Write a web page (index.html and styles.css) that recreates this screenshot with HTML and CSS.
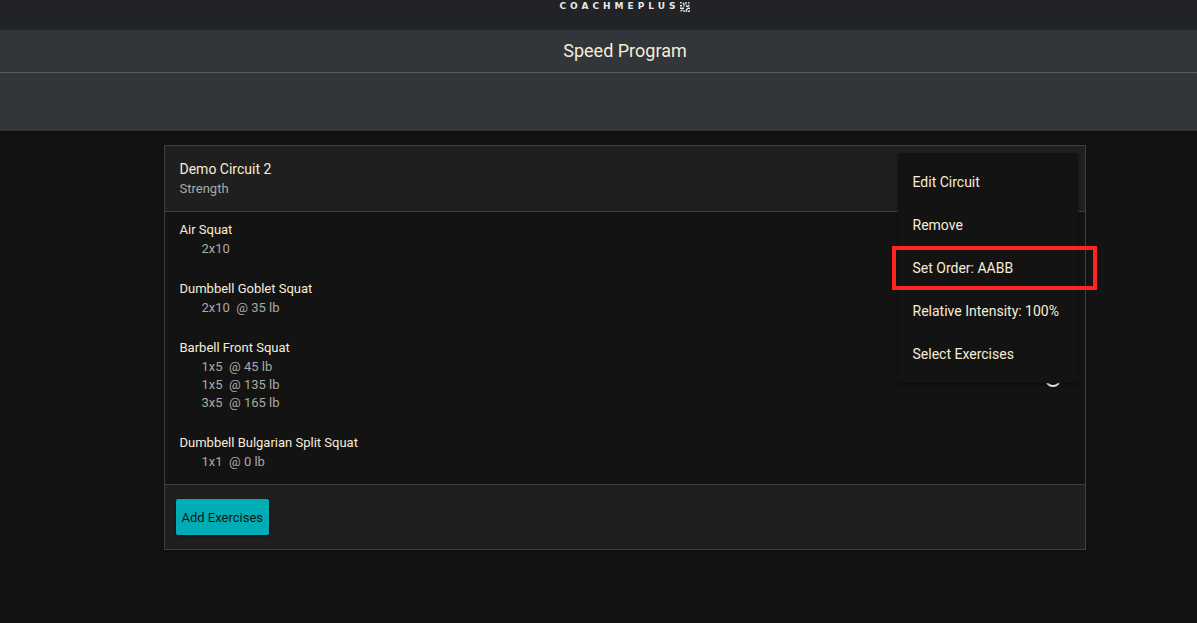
FILE: index.html
```html
<!DOCTYPE html>
<html lang="en">
<head>
<meta charset="utf-8">
<title>Speed Program</title>
<link rel="stylesheet" href="styles.css">
</head>
<body>
<header class="brand-bar">
  <div class="brand">
    <span class="brand-name">COACHMEPLUS</span>
    <svg class="brand-mark" viewBox="0 0 20 20" aria-hidden="true">
      <g fill="none" stroke="currentColor" stroke-width="2.6">
        <path d="M0 1.5H3M5.5 1.5L8 4V9M0 7.5H4"/>
        <path d="M12 0V5M16 2.5L19 1M12 8.5H16L18.5 6"/>
        <path d="M0 12.5H8M1 18.5L5 15.5M8 16V20"/>
        <path d="M20 12.5H16L12.5 16V20M19 16.5V20M15.5 18.7H20"/>
      </g>
    </svg>
  </div>
</header>
<div class="title-bar"><h1 class="title">Speed Program</h1></div>
<div class="tool-bar"></div>
<main class="content">
  <section class="card">
    <header class="card-head">
      <h2 class="circuit-name">Demo Circuit 2</h2>
      <p class="circuit-type">Strength</p>
      <div class="menu">
        <button class="menu-item" type="button">Edit Circuit</button>
        <button class="menu-item" type="button">Remove</button>
        <button class="menu-item highlighted" type="button">Set Order: AABB</button>
        <button class="menu-item" type="button">Relative Intensity: 100%</button>
        <button class="menu-item" type="button">Select Exercises</button>
      </div>
    </header>
    <div class="exercises">
      <article class="exercise">
        <div><h3 class="exercise-name">Air Squat</h3>
        <p class="set">2x10</p></div>
      </article>
      <article class="exercise">
        <div><h3 class="exercise-name">Dumbbell Goblet Squat</h3>
        <p class="set">2x10&nbsp; @ 35 lb</p></div>
      </article>
      <article class="exercise">
        <div><h3 class="exercise-name">Barbell Front Squat</h3>
        <p class="set">1x5&nbsp; @ 45 lb</p>
        <p class="set">1x5&nbsp; @ 135 lb</p>
        <p class="set">3x5&nbsp; @ 165 lb</p></div>
        <svg class="info" viewBox="0 0 16 16" aria-hidden="true"><circle cx="8" cy="8" r="7" fill="none" stroke="currentColor" stroke-width="2"/></svg>
      </article>
      <article class="exercise">
        <div><h3 class="exercise-name">Dumbbell Bulgarian Split Squat</h3>
        <p class="set">1x1&nbsp; @ 0 lb</p></div>
      </article>
    </div>
    <footer class="card-foot">
      <button class="add" type="button">Add Exercises</button>
    </footer>
  </section>
</main>
</body>
</html>
```
FILE: styles.css
```css
* {
  box-sizing: border-box;
}

body {
  margin: 0;
  min-height: 100vh;
  background: #131313;
  color: #f8ecd8;
  font-family: Roboto, sans-serif;
}

h1, h2, h3, p {
  margin: 0;
  font-weight: 400;
}

button {
  border: 0;
  font-family: inherit;
  cursor: pointer;
}

.brand-bar {
  display: flex;
  justify-content: center;
  height: 30px;
  padding-left: 52px;
  background: #222327;
}

.brand {
  display: flex;
  height: 13px;
  align-items: center;
  color: #e8e8e8;
}

.brand-name {
  font-family: "DejaVu Sans", sans-serif;
  font-size: 9px;
  line-height: 13px;
  font-weight: 700;
  letter-spacing: 4px;
}

.brand-mark {
  width: 10px;
  height: 10px;
}

.title-bar {
  display: flex;
  align-items: center;
  justify-content: center;
  height: 43px;
  padding-left: 53px;
  background: #32353a;
  border-bottom: 1px solid #5d6065;
}

.title {
  font-size: 18px;
  line-height: 24px;
}

.tool-bar {
  height: 58px;
  background: #32353a;
  box-shadow: 0 2px 4px rgba(0, 0, 0, 0.4);
}

.content {
  padding: 14px 0 14px 52px;
}

.card {
  max-width: 922px;
  margin: 0 auto;
  border: 1px solid #3e3f3f;
  box-shadow: 0 1px 3px rgba(0, 0, 0, 0.4);
}

.card-head {
  position: relative;
  padding: 13px 15px;
  background: #1f1f1f;
  border-bottom: 1px solid #3e3f3f;
}

.circuit-name {
  font-size: 14px;
  line-height: 20px;
}

.circuit-type {
  font-size: 13px;
  line-height: 19px;
  color: #aaa9a7;
}

.menu {
  position: absolute;
  top: 7px;
  right: 7px;
  z-index: 1;
  display: flex;
  flex-direction: column;
  width: 180px;
  padding: 8px 0 7px;
  background: #131313;
  border-radius: 2px;
  box-shadow: 0 1px 3px rgba(0, 0, 0, 0.5);
}

.menu-item {
  position: relative;
  padding: 0 15px;
  background: none;
  color: inherit;
  font-size: 14px;
  line-height: 43px;
  text-align: left;
  white-space: nowrap;
}

.highlighted::after {
  content: "";
  position: absolute;
  inset: -1px -19px 0 -6px;
  border: 4px solid #ff2622;
}

.exercises {
  display: flex;
  flex-direction: column;
  gap: 21px;
  padding: 8px 15px 13px;
}

.exercise {
  display: flex;
  align-items: center;
  justify-content: space-between;
}

.exercise-name {
  font-size: 13px;
  line-height: 20px;
}

.set {
  padding-left: 22px;
  font-size: 13px;
  line-height: 18px;
  color: #aaa9a7;
}

.info {
  width: 16px;
  height: 16px;
  margin-top: 8px;
  margin-right: 9px;
}

.card-foot {
  padding: 14px 11px;
  background: #1f1f1f;
  border-top: 1px solid #3e3f3f;
}

.add {
  display: block;
  height: 36px;
  padding: 0 6px;
  background: #00adb5;
  border-radius: 2px;
  color: #101414;
  font-size: 13px;
  box-shadow: 0 1px 3px rgba(0, 0, 0, 0.4);
}
```
